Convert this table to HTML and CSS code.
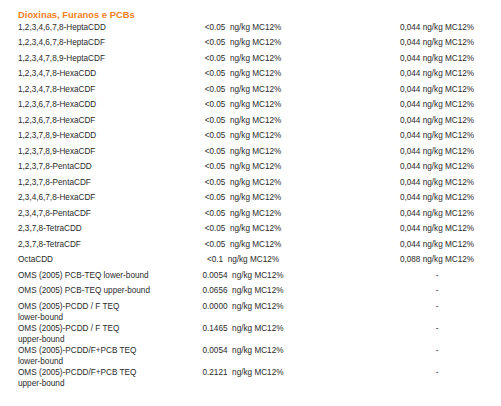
FILE: index.html
```html
<!DOCTYPE html>
<html lang="pt">
<head>
<meta charset="utf-8">
<link rel="stylesheet" href="styles.css">
</head>
<body>
<div class="sheet">
  <h2 class="title">Dioxinas, Furanos e PCBs</h2>
  <div class="table">
    <div class="row"><div class="name">1,2,3,4,6,7,8-HeptaCDD</div><div class="val">&lt;0.05&nbsp; ng/kg MC12%</div><div class="lim">0,044 ng/kg MC12%</div></div>
    <div class="row"><div class="name">1,2,3,4,6,7,8-HeptaCDF</div><div class="val">&lt;0.05&nbsp; ng/kg MC12%</div><div class="lim">0,044 ng/kg MC12%</div></div>
    <div class="row"><div class="name">1,2,3,4,7,8,9-HeptaCDF</div><div class="val">&lt;0.05&nbsp; ng/kg MC12%</div><div class="lim">0,044 ng/kg MC12%</div></div>
    <div class="row"><div class="name">1,2,3,4,7,8-HexaCDD</div><div class="val">&lt;0.05&nbsp; ng/kg MC12%</div><div class="lim">0,044 ng/kg MC12%</div></div>
    <div class="row"><div class="name">1,2,3,4,7,8-HexaCDF</div><div class="val">&lt;0.05&nbsp; ng/kg MC12%</div><div class="lim">0,044 ng/kg MC12%</div></div>
    <div class="row"><div class="name">1,2,3,6,7,8-HexaCDD</div><div class="val">&lt;0.05&nbsp; ng/kg MC12%</div><div class="lim">0,044 ng/kg MC12%</div></div>
    <div class="row"><div class="name">1,2,3,6,7,8-HexaCDF</div><div class="val">&lt;0.05&nbsp; ng/kg MC12%</div><div class="lim">0,044 ng/kg MC12%</div></div>
    <div class="row"><div class="name">1,2,3,7,8,9-HexaCDD</div><div class="val">&lt;0.05&nbsp; ng/kg MC12%</div><div class="lim">0,044 ng/kg MC12%</div></div>
    <div class="row"><div class="name">1,2,3,7,8,9-HexaCDF</div><div class="val">&lt;0.05&nbsp; ng/kg MC12%</div><div class="lim">0,044 ng/kg MC12%</div></div>
    <div class="row"><div class="name">1,2,3,7,8-PentaCDD</div><div class="val">&lt;0.05&nbsp; ng/kg MC12%</div><div class="lim">0,044 ng/kg MC12%</div></div>
    <div class="row"><div class="name">1,2,3,7,8-PentaCDF</div><div class="val">&lt;0.05&nbsp; ng/kg MC12%</div><div class="lim">0,044 ng/kg MC12%</div></div>
    <div class="row"><div class="name">2,3,4,6,7,8-HexaCDF</div><div class="val">&lt;0.05&nbsp; ng/kg MC12%</div><div class="lim">0,044 ng/kg MC12%</div></div>
    <div class="row"><div class="name">2,3,4,7,8-PentaCDF</div><div class="val">&lt;0.05&nbsp; ng/kg MC12%</div><div class="lim">0,044 ng/kg MC12%</div></div>
    <div class="row"><div class="name">2,3,7,8-TetraCDD</div><div class="val">&lt;0.05&nbsp; ng/kg MC12%</div><div class="lim">0,044 ng/kg MC12%</div></div>
    <div class="row"><div class="name">2,3,7,8-TetraCDF</div><div class="val">&lt;0.05&nbsp; ng/kg MC12%</div><div class="lim">0,044 ng/kg MC12%</div></div>
    <div class="row"><div class="name">OctaCDD</div><div class="val">&lt;0.1&nbsp; ng/kg MC12%</div><div class="lim">0,088 ng/kg MC12%</div></div>
    <div class="row"><div class="name">OMS (2005) PCB-TEQ lower-bound</div><div class="val">0.0054&nbsp; ng/kg MC12%</div><div class="lim">-</div></div>
    <div class="row"><div class="name">OMS (2005) PCB-TEQ upper-bound</div><div class="val">0.0656&nbsp; ng/kg MC12%</div><div class="lim">-</div></div>
    <div class="row"><div class="name narrow">OMS (2005)-PCDD / F TEQ <span class="bound">lower-bound</span></div><div class="val">0.0000&nbsp; ng/kg MC12%</div><div class="lim">-</div></div>
    <div class="row"><div class="name narrow">OMS (2005)-PCDD / F TEQ <span class="bound">upper-bound</span></div><div class="val">0.1465&nbsp; ng/kg MC12%</div><div class="lim">-</div></div>
    <div class="row"><div class="name narrow">OMS (2005)-PCDD/F+PCB TEQ <span class="bound">lower-bound</span></div><div class="val">0.0054&nbsp; ng/kg MC12%</div><div class="lim">-</div></div>
    <div class="row"><div class="name narrow">OMS (2005)-PCDD/F+PCB TEQ <span class="bound">upper-bound</span></div><div class="val">0.2121&nbsp; ng/kg MC12%</div><div class="lim">-</div></div>
  </div>
</div>
</body>
</html>
```

FILE: styles.css
```css
html, body {
  margin: 0;
  padding: 0;
  background: #ffffff;
}

.sheet {
  padding: 9px 0 0 18px;
  font-family: "Liberation Sans", Arial, sans-serif;
  color: #2a2a2a;
}

.title {
  margin: 0;
  font-size: 9.4px;
  line-height: 12.5px;
  font-weight: bold;
  color: #f07f1f;
}

.table {
  display: flex;
  flex-direction: column;
}

.row {
  display: grid;
  grid-template-columns: 170px 110px 118px;
  column-gap: 0;
  min-height: 15.5px;
  align-items: start;
  font-size: 8.2px;
  line-height: 11px;
}

.name.narrow {
  width: 128px;
}

.bound {
  white-space: nowrap;
}

.val {
  text-align: center;
}

.lim {
  margin-left: 80px;
  width: 118px;
  text-align: center;
}
```
